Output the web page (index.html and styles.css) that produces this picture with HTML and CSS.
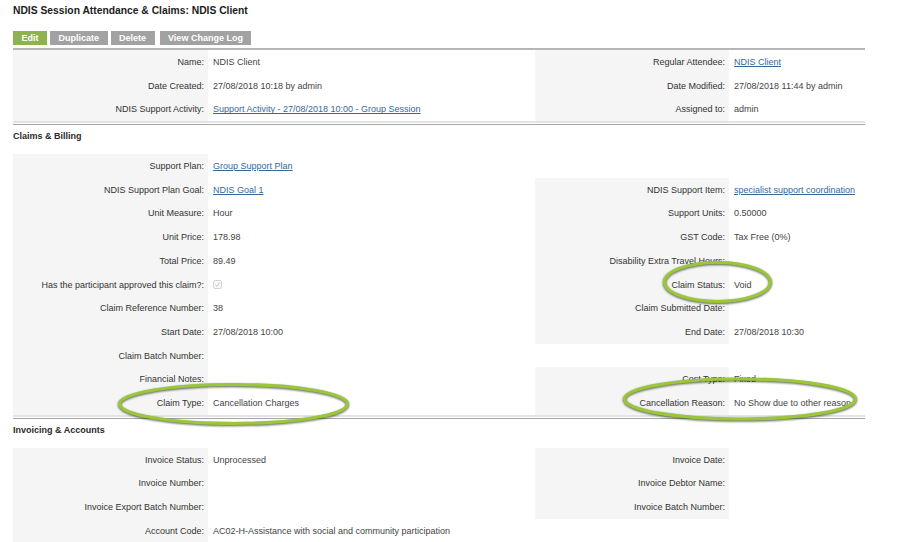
FILE: index.html
```html
<!DOCTYPE html>
<html lang="en">
<head>
    <meta charset="UTF-8">
    <title>NDIS Session Attendance &amp; Claims: NDIS Client</title>
    <link rel="stylesheet" href="styles.css">
</head>
<body>
    <div class="page">
        <h1 class="title">NDIS Session Attendance &amp; Claims: NDIS Client</h1>
        <div class="actions">
            <a class="btn btn-edit" href="#">Edit</a>
            <a class="btn" href="#">Duplicate</a>
            <a class="btn" href="#">Delete</a>
            <a class="btn btn-log" href="#">View Change Log</a>
        </div>

        <div class="details first">
            <div class="lbl">Name:</div>
            <div class="val">NDIS Client</div>
            <div class="lbl">Regular Attendee:</div>
            <div class="val"><a href="#">NDIS Client</a></div>

            <div class="lbl">Date Created:</div>
            <div class="val">27/08/2018 10:18 by admin</div>
            <div class="lbl">Date Modified:</div>
            <div class="val">27/08/2018 11:44 by admin</div>

            <div class="lbl">NDIS Support Activity:</div>
            <div class="val"><a href="#">Support Activity - 27/08/2018 10:00 - Group Session</a></div>
            <div class="lbl">Assigned to:</div>
            <div class="val">admin</div>
        </div>
        <div class="rule"></div>

        <h2 class="section-title">Claims &amp; Billing</h2>
        <div class="details">
            <div class="lbl">Support Plan:</div>
            <div class="val"><a href="#">Group Support Plan</a></div>
            <div class="empty"></div>
            <div class="empty"></div>

            <div class="lbl">NDIS Support Plan Goal:</div>
            <div class="val"><a href="#">NDIS Goal 1</a></div>
            <div class="lbl">NDIS Support Item:</div>
            <div class="val"><a href="#">specialist support coordination</a></div>

            <div class="lbl">Unit Measure:</div>
            <div class="val">Hour</div>
            <div class="lbl">Support Units:</div>
            <div class="val">0.50000</div>

            <div class="lbl">Unit Price:</div>
            <div class="val">178.98</div>
            <div class="lbl">GST Code:</div>
            <div class="val">Tax Free (0%)</div>

            <div class="lbl">Total Price:</div>
            <div class="val">89.49</div>
            <div class="lbl">Disability Extra Travel Hours:</div>
            <div class="val"></div>

            <div class="lbl">Has the participant approved this claim?:</div>
            <div class="val"><span class="check"><svg width="7" height="7" viewBox="0 0 7 7"><path d="M1.2 3.8 L2.8 5.3 L5.9 1.4" fill="none" stroke="#b9b9b9" stroke-width="0.9"/></svg></span></div>
            <div class="lbl">Claim Status:</div>
            <div class="val">Void</div>

            <div class="lbl">Claim Reference Number:</div>
            <div class="val">38</div>
            <div class="lbl">Claim Submitted Date:</div>
            <div class="val"></div>

            <div class="lbl">Start Date:</div>
            <div class="val">27/08/2018 10:00</div>
            <div class="lbl">End Date:</div>
            <div class="val">27/08/2018 10:30</div>

            <div class="lbl">Claim Batch Number:</div>
            <div class="val"></div>
            <div class="empty"></div>
            <div class="empty"></div>

            <div class="lbl">Financial Notes:</div>
            <div class="val"></div>
            <div class="lbl">Cost Type:</div>
            <div class="val">Fixed</div>

            <div class="lbl">Claim Type:</div>
            <div class="val">Cancellation Charges</div>
            <div class="lbl">Cancellation Reason:</div>
            <div class="val">No Show due to other reason</div>
        </div>
        <div class="rule"></div>

        <h2 class="section-title">Invoicing &amp; Accounts</h2>
        <div class="details">
            <div class="lbl">Invoice Status:</div>
            <div class="val">Unprocessed</div>
            <div class="lbl">Invoice Date:</div>
            <div class="val"></div>

            <div class="lbl">Invoice Number:</div>
            <div class="val"></div>
            <div class="lbl">Invoice Debtor Name:</div>
            <div class="val"></div>

            <div class="lbl">Invoice Export Batch Number:</div>
            <div class="val"></div>
            <div class="lbl">Invoice Batch Number:</div>
            <div class="val"></div>

            <div class="lbl">Account Code:</div>
            <div class="val">AC02-H-Assistance with social and community participation</div>
            <div class="empty"></div>
            <div class="empty"></div>
        </div>
    </div>

    <!-- highlight rings drawn over the screenshot -->
    <svg class="marks" width="900" height="542" viewBox="0 0 900 542">
        <ellipse class="ring" cx="717.5" cy="282" rx="53" ry="19.5"/>
        <ellipse class="ring" cx="233.5" cy="404" rx="114" ry="19.5"/>
        <ellipse class="ring" cx="740" cy="399" rx="115.5" ry="20"/>
    </svg>
</body>
</html>
```

FILE: styles.css
```css
html {
    overflow: hidden;
}
body {
    margin: 0;
    padding: 0;
    font-family: "Liberation Sans", Arial, Helvetica, sans-serif;
    font-size: 9px;
    color: #333;
    background-color: #fff;
    position: relative;
}
.page {
    padding-left: 13px;
    width: 852px;
}
.title {
    font-size: 10.3px;
    font-weight: bold;
    line-height: 12px;
    margin: 5px 0 14px;
    color: #1c1c1c;
}
.actions {
    display: flex;
    gap: 3px;
    height: 14px;
    margin-bottom: 3px;
}
.btn {
    display: block;
    height: 14px;
    line-height: 14px;
    padding: 0 8.5px;
    background-color: #a2a2a2;
    color: #fff;
    font-weight: bold;
    text-decoration: none;
}
.btn-edit {
    background-color: #8db24f;
}
.btn-log {
    margin-left: 2px;
}
.details {
    display: grid;
    grid-template-columns: 195px 327px 194px 136px;
    grid-auto-rows: 23.7px;
    border-bottom: 2px solid #e4e4e4;
}
.details.first {
    border-top: 2px solid #b6b6b6;
}
.details > div {
    box-sizing: border-box;
    padding-top: 2px;
    line-height: 21.7px;
    white-space: nowrap;
    overflow: visible;
}
.lbl {
    background-color: #f5f5f5;
    text-align: right;
    padding-right: 4px;
    color: #333;
}
.val {
    padding-left: 5px;
    color: #444;
}
.val a {
    color: #36689b;
    text-decoration: underline;
}
.rule {
    margin-top: 1px;
    border-top: 1px solid #a6a6a6;
}
.section-title {
    font-size: 9px;
    font-weight: bold;
    line-height: 12px;
    height: 29px;
    box-sizing: border-box;
    padding-top: 5px;
    margin: 0;
    color: #2a2a2a;
}
.check {
    display: inline-block;
    width: 7px;
    height: 7px;
    border: 1px solid #d4d4d4;
    border-radius: 2px;
    background-color: #fafafa;
    vertical-align: middle;
    position: relative;
    top: -1px;
}
.check svg {
    display: block;
}
.marks {
    position: absolute;
    top: 0;
    left: 0;
    pointer-events: none;
}
.ring {
    fill: none;
    stroke: #9cc63a;
    stroke-width: 3.2;
    filter: drop-shadow(0.5px 1.5px 1px rgba(30, 40, 15, 0.75));
}
```
